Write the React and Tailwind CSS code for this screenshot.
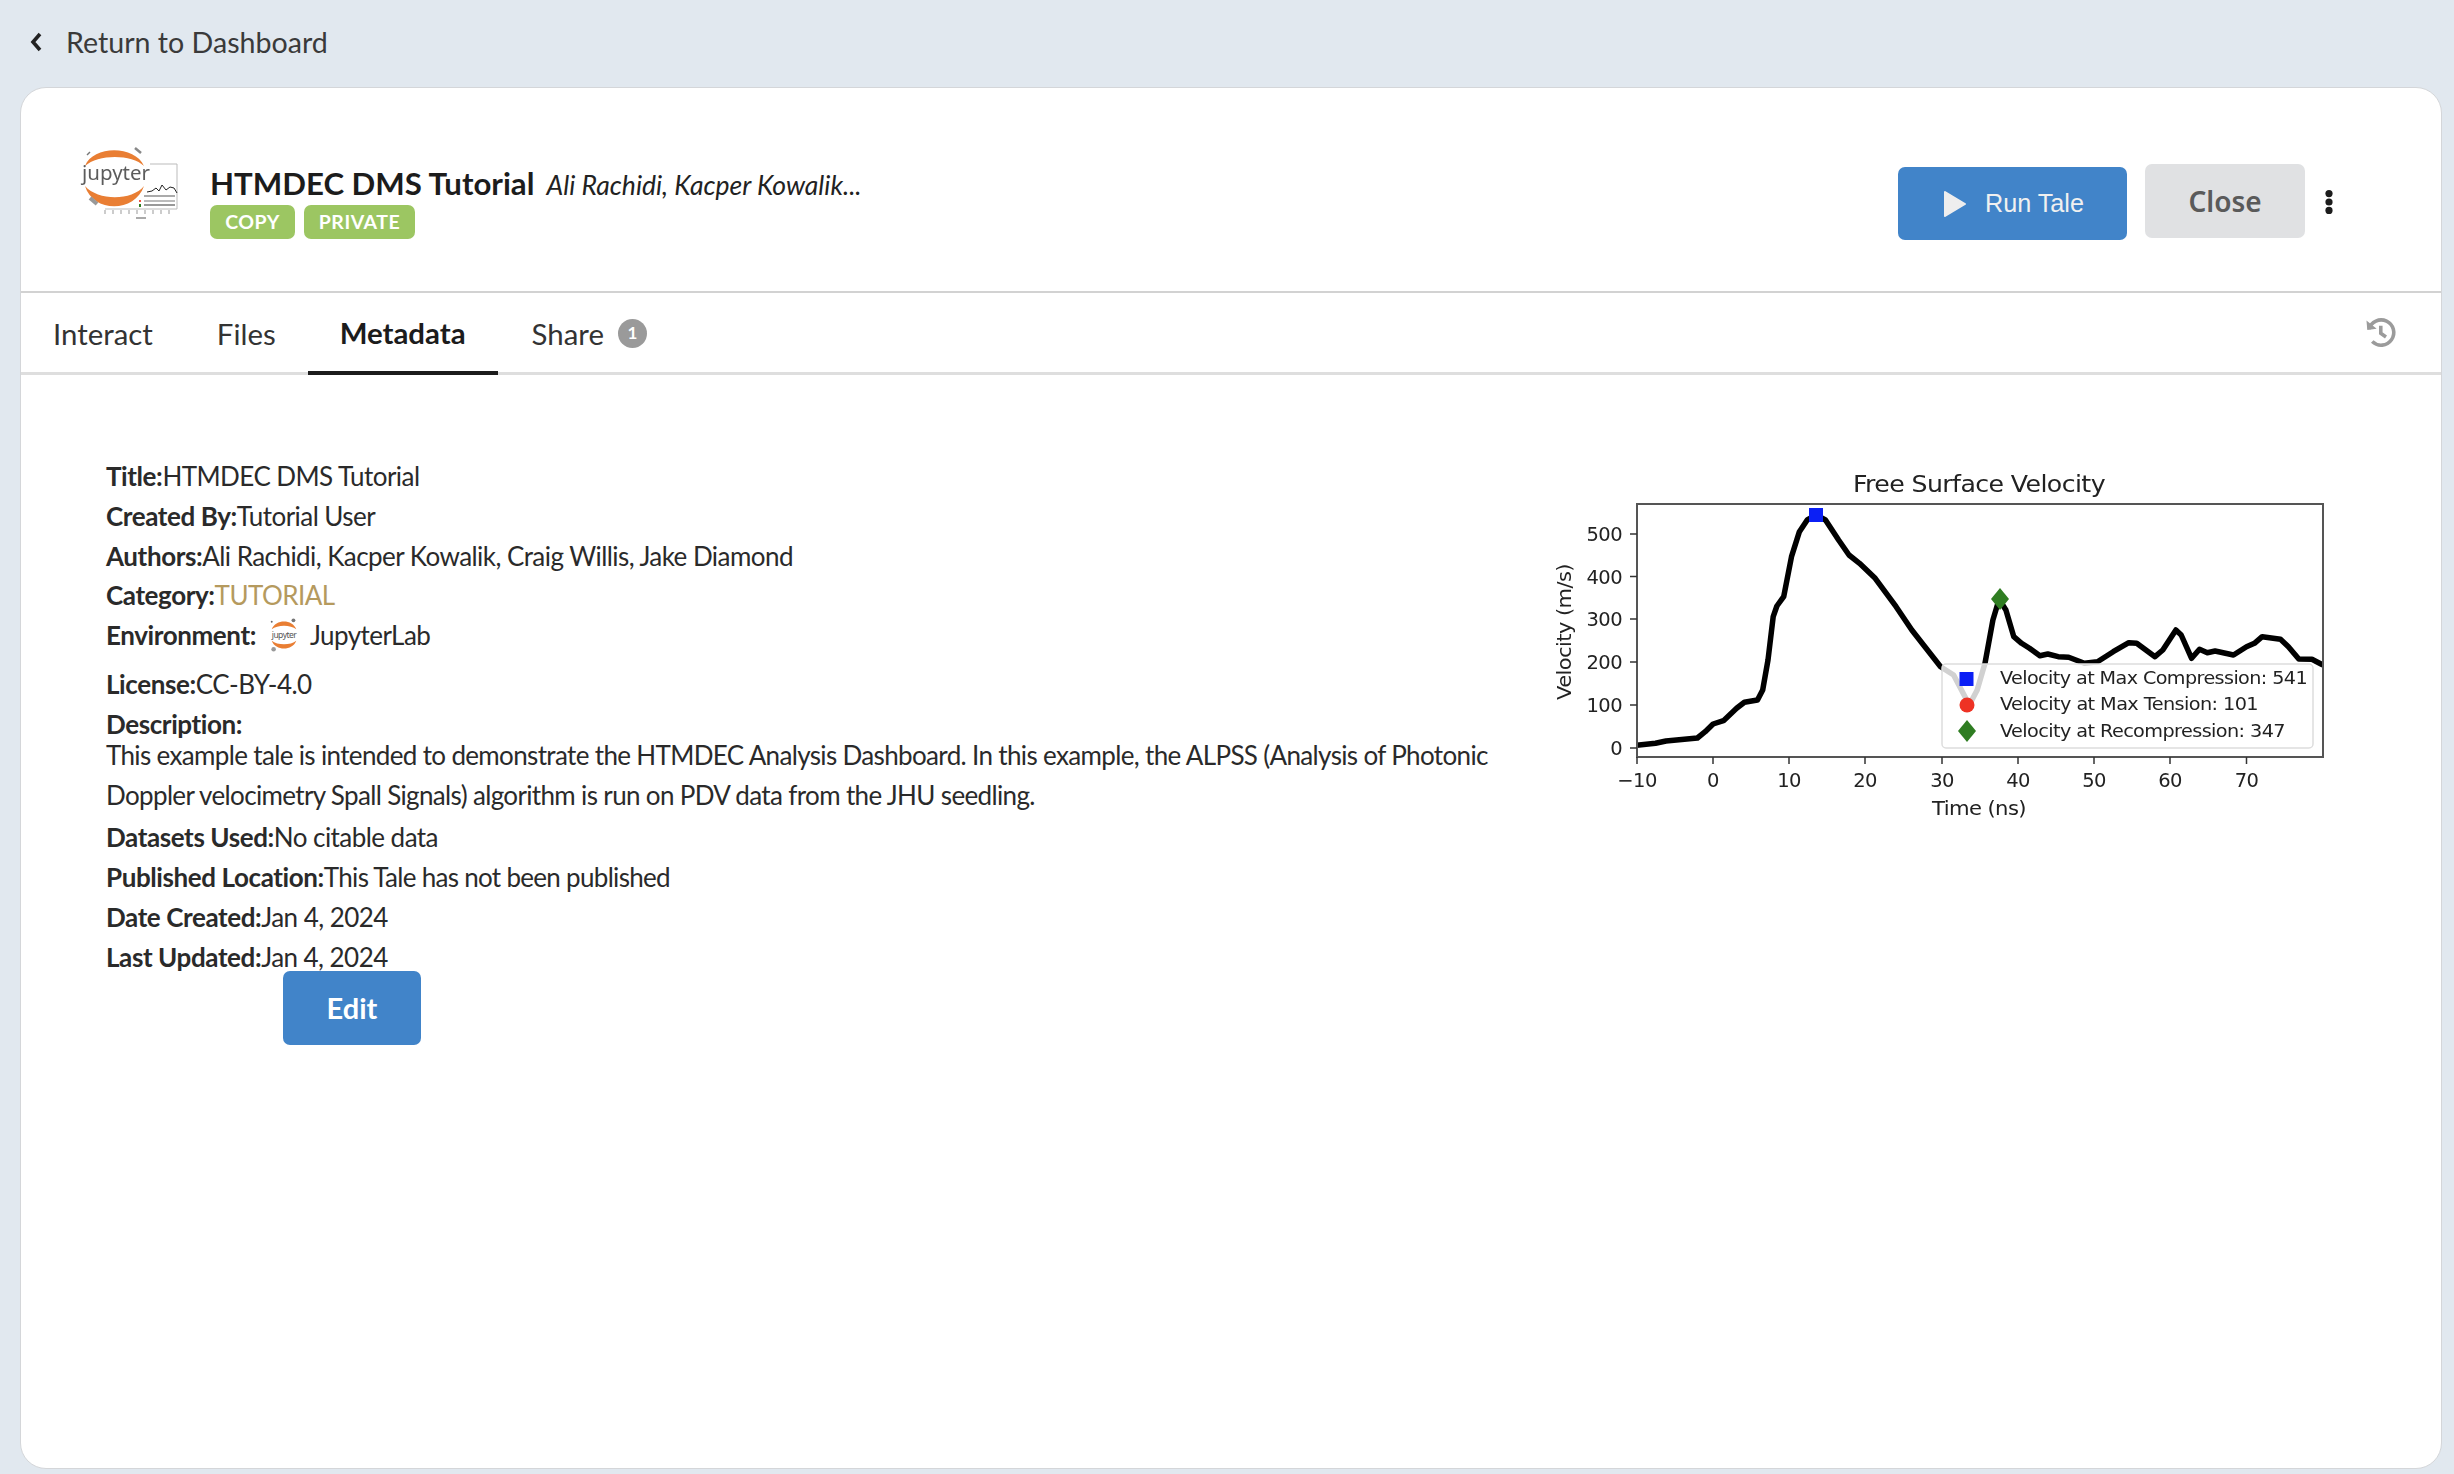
import React from "react";

const pts = [[204,856],[240,850],[260,843],[320,834],[335,815],[350,792],[370,782],[395,745],[410,727],[435,720],[445,690],[455,600],[465,470],[472,438],[485,410],[500,290],[515,215],[530,180],[547,165],[565,180],[590,240],[610,285],[630,310],[660,355],[700,440],[730,510],[755,560],[785,620],[810,645],[835,720],[840,735],[855,690],[870,610],[885,480],[897,418],[910,450],[925,530],[940,550],[955,565],[975,587],[990,582],[1010,590],[1030,592],[1060,610],[1085,605],[1115,575],[1145,548],[1160,550],[1195,590],[1210,570],[1235,510],[1245,525],[1265,595],[1280,568],[1295,578],[1310,573],[1345,585],[1370,560],[1385,550],[1400,530],[1435,538],[1450,560],[1470,597],[1495,598],[1516,615]];
const d = pts.map((p, i) => `${i ? "L" : "M"}${(p[0] / 1.912).toFixed(1)} ${(p[1] / 3).toFixed(1)}`).join(" ");
const xt = [["−10",107],["0",183],["10",259],["20",335],["30",412],["40",488],["50",564],["60",640],["70",716.5]];
const yt = [["0",288],["100",245],["200",202],["300",159],["400",116.5],["500",74]];

function Chart() {
  return (
    <svg width="820" height="380" viewBox="0 0 820 380" className="shrink-0 mt-[3px] blur-[0.5px]" fontFamily="'DejaVu Sans', sans-serif" fill="#222">
      <text x="449" y="32" fontSize="23" textAnchor="middle" textLength="252" lengthAdjust="spacingAndGlyphs">Free Surface Velocity</text>
      <path d={d} fill="none" stroke="#000" strokeWidth="5.5" strokeLinejoin="round" />
      <rect x="107" y="44" width="686" height="253" fill="none" stroke="#555" strokeWidth="2" />
      {xt.map(([t, x]) => (
        <g key={t}>
          <line x1={x} x2={x} y1="297" y2="304" stroke="#333" strokeWidth="1.5" />
          <text x={x} y="327" fontSize="19.5" textAnchor="middle">{t}</text>
        </g>
      ))}
      {yt.map(([t, y]) => (
        <g key={t}>
          <line x1="100" x2="107" y1={y} y2={y} stroke="#333" strokeWidth="1.5" />
          <text x="92" y={y + 7} fontSize="19.5" textAnchor="end">{t}</text>
        </g>
      ))}
      <text x="449" y="355" fontSize="19.5" textAnchor="middle" textLength="94" lengthAdjust="spacingAndGlyphs">Time (ns)</text>
      <text transform="translate(41 172) rotate(-90)" fontSize="20" textAnchor="middle" textLength="136" lengthAdjust="spacingAndGlyphs">Velocity (m/s)</text>
      <rect x="412" y="204" width="371" height="84" rx="4" fill="#fff" fillOpacity="0.82" stroke="#ddd" strokeWidth="1.5" />
      <rect x="429.5" y="212" width="14" height="14" fill="#0b1ff5" />
      <circle cx="437" cy="245" r="7.5" fill="#ee3224" />
      <polygon points="437,260 446,271 437,282 428,271" fill="#2f7d22" />
      <text x="470" y="224" fontSize="18" textLength="307" lengthAdjust="spacingAndGlyphs">Velocity at Max Compression: 541</text>
      <text x="470" y="250" fontSize="18" textLength="258" lengthAdjust="spacingAndGlyphs">Velocity at Max Tension: 101</text>
      <text x="470" y="277" fontSize="18" textLength="285" lengthAdjust="spacingAndGlyphs">Velocity at Recompression: 347</text>
      <rect x="279" y="48" width="14" height="14" fill="#0b1ff5" />
      <polygon points="470,128 479,139 470,150 461,139" fill="#2f7d22" />
    </svg>
  );
}

function JupyterMark({ size = 34 }) {
  return (
    <svg width={size} height={size} viewBox="0 0 34 36" className="shrink-0">
      <path d="M4 12 C8 1 26 1 30 12 C24 7 10 7 4 12Z" fill="#e97e33" />
      <path d="M4 24 C8 35 26 35 30 24 C24 29 10 29 4 24Z" fill="#e97e33" />
      <circle cx="27" cy="2.5" r="2" fill="#777" />
      <circle cx="6" cy="33" r="2.4" fill="#999" />
      <circle cx="4" cy="4" r="1" fill="#666" />
      <text x="17" y="21" fontSize="9" textAnchor="middle" fill="#555" fontFamily="'Noto Sans', sans-serif">jupyter</text>
    </svg>
  );
}

function Logo() {
  return (
    <svg width="130" height="110" viewBox="0 0 130 110" className="shrink-0 mt-[43px] blur-[0.4px]">
      <path d="M25 35 C33 14 75 14 84 35 C72 23 38 23 25 35Z" fill="#e97e33" />
      <path d="M25 55 C33 82 75 82 84 55 C72 70 38 70 25 55Z" fill="#e97e33" />
      <path d="M75 17 L81 22" stroke="#888" strokeWidth="2.5" />
      <path d="M27 24 L30 21" stroke="#777" strokeWidth="1.5" />
      <path d="M30 67 L37 73" stroke="#999" strokeWidth="4" />
      <path d="M90 33 H117 V78 H45" fill="none" stroke="#bbb" strokeWidth="1" />
      <text x="56" y="49" fontSize="19" textAnchor="middle" fill="#5c5c5c" fontFamily="'Noto Sans', sans-serif" textLength="68" lengthAdjust="spacingAndGlyphs">jupyter</text>
      <path d="M87 61 L92 60 L96 57 L99 60 L102 54 L106 59 L110 56 L114 57 L117 62" fill="none" stroke="#222" strokeWidth="1" />
      <rect x="84" y="64" width="31" height="2" fill="#aaa" />
      <rect x="84" y="69" width="31" height="2" fill="#bbb" />
      <rect x="79" y="69" width="2" height="2" fill="#ee5544" />
      <rect x="84" y="73" width="31" height="2" fill="#999" />
      <rect x="79" y="73" width="2" height="3" fill="#2f7d22" />
      <path d="M45 79 v4 M53 79 v4 M61 79 v4 M69 79 v4 M77 79 v4 M85 79 v4 M93 79 v4 M101 79 v4 M109 79 v4" stroke="#999" strokeWidth="1" />
      <rect x="76" y="86" width="10" height="2" fill="#aaa" />
    </svg>
  );
}

function Row({ label, children, className = "" }) {
  return (
    <div className={`h-[39.8px] leading-[39.8px] whitespace-nowrap ${className}`}>
      <b className="font-bold tracking-[-0.4px]">{label}</b>
      {children}
    </div>
  );
}

export default function App() {
  return (
    <div className="w-full h-[1474px] bg-[#e1e8ef] flex flex-col font-['Lato','Liberation_Sans',sans-serif] text-[#2a2a2a] overflow-hidden">
      <div className="h-[87px] shrink-0 flex items-center pl-[30px] pb-[3px] text-[28.6px] text-[#3a3a3a]">
        <svg width="13" height="20" viewBox="0 0 13 20" className="mr-[23px]">
          <path d="M10 2 L3 10 L10 18" fill="none" stroke="#222" strokeWidth="3.6" />
        </svg>
        Return to Dashboard
      </div>

      <div className="flex-1 ml-[20px] mr-[12px] mb-[5px] bg-white rounded-[26px] border border-[#d4d6d9] flex flex-col overflow-hidden">
        <div className="h-[205px] shrink-0 border-b-2 border-[#d2d2d2] flex items-start pl-[39px] pr-[108px]">
          <Logo />
          <div className="ml-[20px] mt-[75px]">
            <div className="flex items-baseline h-[40px] leading-[40px] whitespace-nowrap">
              <span className="text-[31.2px] font-bold text-[#1c1c1c]">HTMDEC DMS Tutorial</span>
              <span className="ml-[12px] text-[26.5px] italic text-[#222]">Ali Rachidi, Kacper Kowalik...</span>
            </div>
            <div className="flex gap-[9px] mt-[2px]">
              <span className="w-[85px] h-[34px] flex items-center justify-center rounded-[7px] bg-[#9cc662] text-white text-[19.5px] font-bold tracking-[0.5px]">COPY</span>
              <span className="w-[111px] h-[34px] flex items-center justify-center rounded-[7px] bg-[#9cc662] text-white text-[19.5px] font-bold tracking-[0.5px]">PRIVATE</span>
            </div>
          </div>
          <div className="ml-auto mt-[76px] flex items-start">
            <button className="mt-[3px] w-[229px] h-[73px] pl-[2px] rounded-[7px] bg-[#4184c9] text-[#f0f0f0] flex items-center justify-center font-['Liberation_Sans',sans-serif] text-[25.2px]">
              <svg width="24" height="28" viewBox="0 0 24 28" className="mr-[18px]">
                <path d="M2 2 L22 14 L2 26 Z" fill="#eeeeee" stroke="#eeeeee" strokeWidth="2" strokeLinejoin="round" />
              </svg>
              Run Tale
            </button>
            <button className="ml-[18px] w-[160px] h-[74px] rounded-[7px] bg-[#e0e1e3] text-[#5a5a5a] flex items-center justify-center font-['Noto_Sans',sans-serif] font-semibold text-[28px]">
              Close
            </button>
            <svg width="8" height="24" viewBox="0 0 8 24" className="ml-[20px] mt-[26px]">
              <circle cx="4" cy="3.6" r="3.6" fill="#1c1c1c" />
              <circle cx="4" cy="12" r="3.6" fill="#1c1c1c" />
              <circle cx="4" cy="20.4" r="3.6" fill="#1c1c1c" />
            </svg>
          </div>
        </div>

        <div className="h-[82px] shrink-0 border-b-[3px] border-[#dedede] flex items-stretch text-[29.4px] text-[#333]">
          <div className="px-[32px] pt-[3px] flex items-center">Interact</div>
          <div className="px-[32px] pt-[3px] flex items-center">Files</div>
          <div className="px-[32px] pt-[3px] flex items-center font-bold text-[#1c1c1c] border-b-[4px] border-[#1c1c1c] -mb-[3px]">Metadata</div>
          <div className="pl-[34px] pt-[3px] flex items-center">
            Share
            <span className="ml-[14px] -mt-[2px] w-[29px] h-[29px] rounded-full bg-[#9a9a9a] text-white text-[17px] font-bold flex items-center justify-center">1</span>
          </div>
          <div className="ml-auto pr-[44px] flex items-center pb-[1px]">
            <svg width="33" height="33" viewBox="0 0 24 24" fill="none" stroke="#9b9b9b" strokeWidth="2.6" strokeLinecap="butt" strokeLinejoin="miter">
              <path d="M3.6 9.5 A9.2 9.2 0 1 1 6 18.6" />
              <path d="M1.8 3.2 L2.4 10.2 L9.2 9.2 Z" fill="#9b9b9b" stroke="none" />
              <path d="M12.2 7 V12.6 L16 15.2" />
            </svg>
          </div>
        </div>

        <div className="flex pl-[85px] pt-[82px] text-[26px] tracking-[-0.55px] leading-[40px] text-[#2a2a2a]">
          <div className="w-[1424px] shrink-0">
            <Row label="Title:">HTMDEC DMS Tutorial</Row>
            <Row label="Created By:">Tutorial User</Row>
            <Row label="Authors:">Ali Rachidi, Kacper Kowalik, Craig Willis, Jake Diamond</Row>
            <Row label="Category:"><span className="text-[#b59a5e]">TUTORIAL</span></Row>
            <div className="h-[38px] mb-[10.5px] flex items-center whitespace-nowrap">
              <b className="font-bold tracking-[-0.4px]">Environment:</b>
              <span className="ml-[11px]"><JupyterMark /></span>
              <span className="ml-[9px]">JupyterLab</span>
            </div>
            <Row label="License:">CC-BY-4.0</Row>
            <div className="h-[40px] leading-[40px] font-bold tracking-[-0.4px]">Description:</div>
            <div className="-mt-[8px] w-[1400px] leading-[39.5px] tracking-[-0.65px]">
              This example tale is intended to demonstrate the HTMDEC Analysis Dashboard. In this example, the ALPSS (Analysis of Photonic Doppler velocimetry Spall Signals) algorithm is run on PDV data from the JHU seedling.
            </div>
            <Row label="Datasets Used:" className="mt-[3px]">No citable data</Row>
            <Row label="Published Location:"><span className="tracking-[-0.7px]">This Tale has not been published</span></Row>
            <Row label="Date Created:">Jan 4, 2024</Row>
            <Row label="Last Updated:">Jan 4, 2024</Row>
            <button className="block -mt-[7px] ml-[177px] w-[138px] h-[74px] rounded-[7px] bg-[#4184c9] text-white font-bold text-[29px] tracking-normal">Edit</button>
          </div>
          <Chart />
        </div>
      </div>
    </div>
  );
}
